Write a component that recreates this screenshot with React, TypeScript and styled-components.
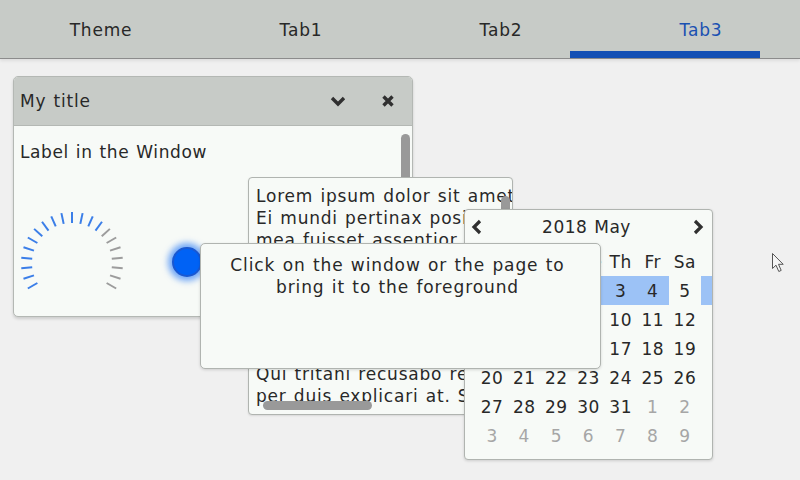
import styled, { createGlobalStyle } from "styled-components";

const GlobalStyle = createGlobalStyle`
  html, body {
    margin: 0;
    padding: 0;
  }
  body {
    background: #f0f0f0;
    font-family: "DejaVu Sans", "Liberation Sans", sans-serif;
    font-size: 17px;
    letter-spacing: 0.8px;
    word-spacing: 1px;
    color: #282828;
  }
`;

const tabs = ["Theme", "Tab1", "Tab2", "Tab3"];
const activeTab = 3;

const loremLines = [
  "Lorem ipsum dolor sit amet, repudiare voluptatibus pri cu.",
  "Ei mundi pertinax posidonium eum, cum tempor maiorum at,",
  "mea fuisset assentior ad. Usu cu suas civibus iudicabit.",
  "Eum eu congue tempor facilisi. Tale hinc unum te vim.",
  "Te cum populo animal eruditi, labitur inciderint at nec.",
  "Eius corpora et quo. Everti voluptaria instructior est id,",
  "vel in falli primis. Mea ei porro essent admodum,",
  "his ei malis quodsi, te quis aeterno his.",
  "Qui tritani recusabo reprehendunt ne,",
  "per duis explicari at. Simul mediocritatem mei et.",
];

const dayNames = ["Su", "Mo", "Tu", "We", "Th", "Fr", "Sa"];

type Day = { n: number; dim?: boolean; today?: boolean };

const weeks: Day[][] = [
  [{ n: 29, dim: true }, { n: 30, dim: true }, { n: 1 }, { n: 2 }, { n: 3 }, { n: 4 }, { n: 5, today: true }],
  [6, 7, 8, 9, 10, 11, 12].map((n) => ({ n })),
  [13, 14, 15, 16, 17, 18, 19].map((n) => ({ n })),
  [20, 21, 22, 23, 24, 25, 26].map((n) => ({ n })),
  [{ n: 27 }, { n: 28 }, { n: 29 }, { n: 30 }, { n: 31 }, { n: 1, dim: true }, { n: 2, dim: true }],
  [3, 4, 5, 6, 7, 8, 9].map((n) => ({ n, dim: true })),
];

const Gauge = () => {
  const cx = 55;
  const cy = 55;
  const ticks = 21;
  const active = 14;
  const lines = [];
  for (let i = 0; i < ticks; i++) {
    const a = ((-120 + i * 12) * Math.PI) / 180;
    const s = Math.sin(a);
    const c = Math.cos(a);
    lines.push(
      <line
        key={i}
        x1={cx + s * 40}
        y1={cy - c * 40}
        x2={cx + s * 51}
        y2={cy - c * 51}
        stroke={i < active ? "#3b7ee8" : "#9c9c9c"}
        strokeWidth={2}
      />
    );
  }
  return (
    <svg width="110" height="90" viewBox="0 0 110 90">
      {lines}
    </svg>
  );
};

const App = () => {
  return (
    <Screen>
      <GlobalStyle />
      <TabBar>
        {tabs.map((t, i) => (
          <Tab key={t} $active={i === activeTab}>
            {t}
          </Tab>
        ))}
      </TabBar>
      <Desk>
        <Window>
          <WinHeader>
            <WinTitle>My title</WinTitle>
            <HeaderButton>
              <svg width="16" height="12" viewBox="0 0 16 12">
                <polyline points="2,3 8,9 14,3" fill="none" stroke="#303030" strokeWidth="3.4" />
              </svg>
            </HeaderButton>
            <HeaderButton>
              <svg width="14" height="14" viewBox="0 0 14 14">
                <path d="M2.5 2.5 L11.5 11.5 M11.5 2.5 L2.5 11.5" stroke="#303030" strokeWidth="3.4" />
              </svg>
            </HeaderButton>
          </WinHeader>
          <WinBody>
            <Label>Label in the Window</Label>
            <WidgetRow>
              <Gauge />
              <Led />
            </WidgetRow>
            <VScroll $top={8} />
          </WinBody>
        </Window>

        <TextPage>
          {loremLines.map((l) => (
            <TextLine key={l}>{l}</TextLine>
          ))}
          <HScrollBar />
          <PageVScroll />
        </TextPage>

        <Calendar>
          <CalHeader>
            <svg width="12" height="16" viewBox="0 0 12 16">
              <polyline points="9,2 3,8 9,14" fill="none" stroke="#303030" strokeWidth="3.2" />
            </svg>
            <CalTitle>2018 May</CalTitle>
            <svg width="12" height="16" viewBox="0 0 12 16">
              <polyline points="3,2 9,8 3,14" fill="none" stroke="#303030" strokeWidth="3.2" />
            </svg>
          </CalHeader>
          <DayNames>
            {dayNames.map((d) => (
              <Cell key={d}>{d}</Cell>
            ))}
          </DayNames>
          {weeks.map((w, wi) => (
            <WeekRow key={wi} $current={wi === 0}>
              {w.map((d, di) => (
                <Cell key={di} $dim={d.dim} $today={d.today}>
                  {d.n}
                </Cell>
              ))}
            </WeekRow>
          ))}
        </Calendar>

        <MsgBox>
          Click on the window or the page to
          <br />
          bring it to the foreground
        </MsgBox>

        <Cursor>
          <svg width="16" height="22" viewBox="0 0 16 22">
            <path
              d="M1.5 1.5 L1.5 16.5 L5 13.2 L7.8 19.5 L10.2 18.4 L7.5 12.3 L12.2 12.3 Z"
              fill="#f6f6f6"
              stroke="#555"
              strokeWidth="1"
              strokeLinejoin="round"
            />
          </svg>
        </Cursor>
      </Desk>
    </Screen>
  );
};

const Screen = styled.div`
  width: 800px;
  height: 480px;
  overflow: hidden;
  display: flex;
  flex-direction: column;
`;

const TabBar = styled.div`
  height: 58px;
  display: flex;
  background: #c7cbc7;
  border-bottom: 1px solid #8c8c8c;
  box-shadow: 0 2px 3px rgba(0, 0, 0, 0.08);
  position: relative;
  z-index: 1;
`;

const Tab = styled.div<{ $active?: boolean }>`
  flex: 1;
  display: flex;
  align-items: center;
  justify-content: center;
  padding: 2px 0 0 2px;
  color: ${(p) => (p.$active ? "#1a51b2" : "#282828")};
  position: relative;

  &::after {
    content: "";
    display: ${(p) => (p.$active ? "block" : "none")};
    position: absolute;
    left: -30px;
    width: 190px;
    bottom: 0;
    height: 7px;
    background: #1450b4;
  }
`;

const Desk = styled.div`
  flex: 1;
  position: relative;
`;

const Window = styled.div`
  position: absolute;
  left: 13px;
  top: 17px;
  width: 400px;
  height: 241px;
  box-sizing: border-box;
  border: 1px solid #b4b8b4;
  border-radius: 5px;
  background: #f7faf7;
  box-shadow: 0 2px 3px rgba(0, 0, 0, 0.15);
  display: flex;
  flex-direction: column;
  overflow: hidden;
`;

const WinHeader = styled.div`
  height: 48px;
  flex-shrink: 0;
  display: flex;
  align-items: center;
  gap: 6px;
  padding: 0 2px 0 6px;
  background: #c7cbc7;
  border-bottom: 1px solid #b4b8b4;
`;

const WinTitle = styled.div`
  flex: 1;
`;

const HeaderButton = styled.div`
  width: 44px;
  height: 40px;
  display: flex;
  align-items: center;
  justify-content: center;
`;

const WinBody = styled.div`
  flex: 1;
  position: relative;
  padding: 16px 6px 0 3px;
`;

const Label = styled.div`
  line-height: 20px;
  padding-left: 3px;
  letter-spacing: 0.6px;
`;

const WidgetRow = styled.div`
  display: flex;
  align-items: flex-start;
  margin-top: 46px;
`;

const Led = styled.div`
  width: 26px;
  height: 26px;
  margin: 39px 0 0 45px;
  border-radius: 50%;
  background: #0062f5;
  border: 2px solid #1a58d0;
  box-shadow: 0 0 6px 4px rgba(0, 98, 245, 0.55);
`;

const VScroll = styled.div<{ $top: number }>`
  position: absolute;
  right: 2px;
  top: ${(p) => p.$top}px;
  width: 9px;
  height: 70px;
  border-radius: 5px;
  background: #999;
`;

const TextPage = styled.div`
  position: absolute;
  left: 248px;
  top: 118px;
  width: 265px;
  height: 238px;
  box-sizing: border-box;
  border: 1px solid #b0b4b0;
  border-radius: 4px;
  background: #f7faf7;
  padding: 7px 0 0 7px;
  overflow: hidden;
  box-shadow: 0 1px 2px rgba(0, 0, 0, 0.1);
`;

const TextLine = styled.div`
  line-height: 22.2px;
  white-space: pre;
`;

const HScrollBar = styled.div`
  position: absolute;
  left: 14px;
  top: 223px;
  width: 109px;
  height: 9px;
  border-radius: 5px;
  background: #999;
`;

const PageVScroll = styled.div`
  position: absolute;
  left: 252px;
  top: 18px;
  width: 9px;
  height: 60px;
  border-radius: 5px;
  background: #999;
`;

const Calendar = styled.div`
  position: absolute;
  left: 464px;
  top: 150px;
  width: 249px;
  height: 251px;
  box-sizing: border-box;
  border: 1px solid #b0b4b0;
  border-radius: 4px;
  background: #f7faf7;
  box-shadow: 0 1px 3px rgba(0, 0, 0, 0.15);
  overflow: hidden;
  letter-spacing: 0.5px;
`;

const CalHeader = styled.div`
  height: 33px;
  display: flex;
  align-items: center;
  justify-content: space-between;
  padding: 0 8px 0 6px;
`;

const CalTitle = styled.div`
  padding-right: 2px;
`;

const DayNames = styled.div`
  display: grid;
  grid-template-columns: repeat(7, 1fr);
  height: 28px;
  padding: 5px 11px 0 11px;
`;

const WeekRow = styled.div<{ $current?: boolean }>`
  display: grid;
  grid-template-columns: repeat(7, 1fr);
  height: 29px;
  padding: 0 11px;
  background: ${(p) => (p.$current ? "#9cc2f6" : "transparent")};
`;

const Cell = styled.div<{ $dim?: boolean; $today?: boolean }>`
  display: flex;
  align-items: center;
  justify-content: center;
  color: ${(p) => (p.$dim ? "#a6a6a6" : "#282828")};
  background: ${(p) => (p.$today ? "#f7faf7" : "transparent")};
`;

const MsgBox = styled.div`
  position: absolute;
  left: 200px;
  top: 184px;
  width: 401px;
  height: 126px;
  box-sizing: border-box;
  border: 1px solid #b0b4b0;
  border-radius: 5px;
  background: #f7faf7;
  box-shadow: 0 1px 3px rgba(0, 0, 0, 0.15);
  padding: 10px 6px 0 0;
  text-align: center;
  line-height: 22px;
  letter-spacing: 0.9px;
`;

const Cursor = styled.div`
  position: absolute;
  left: 771px;
  top: 193px;
  line-height: 0;
`;

export default App;
